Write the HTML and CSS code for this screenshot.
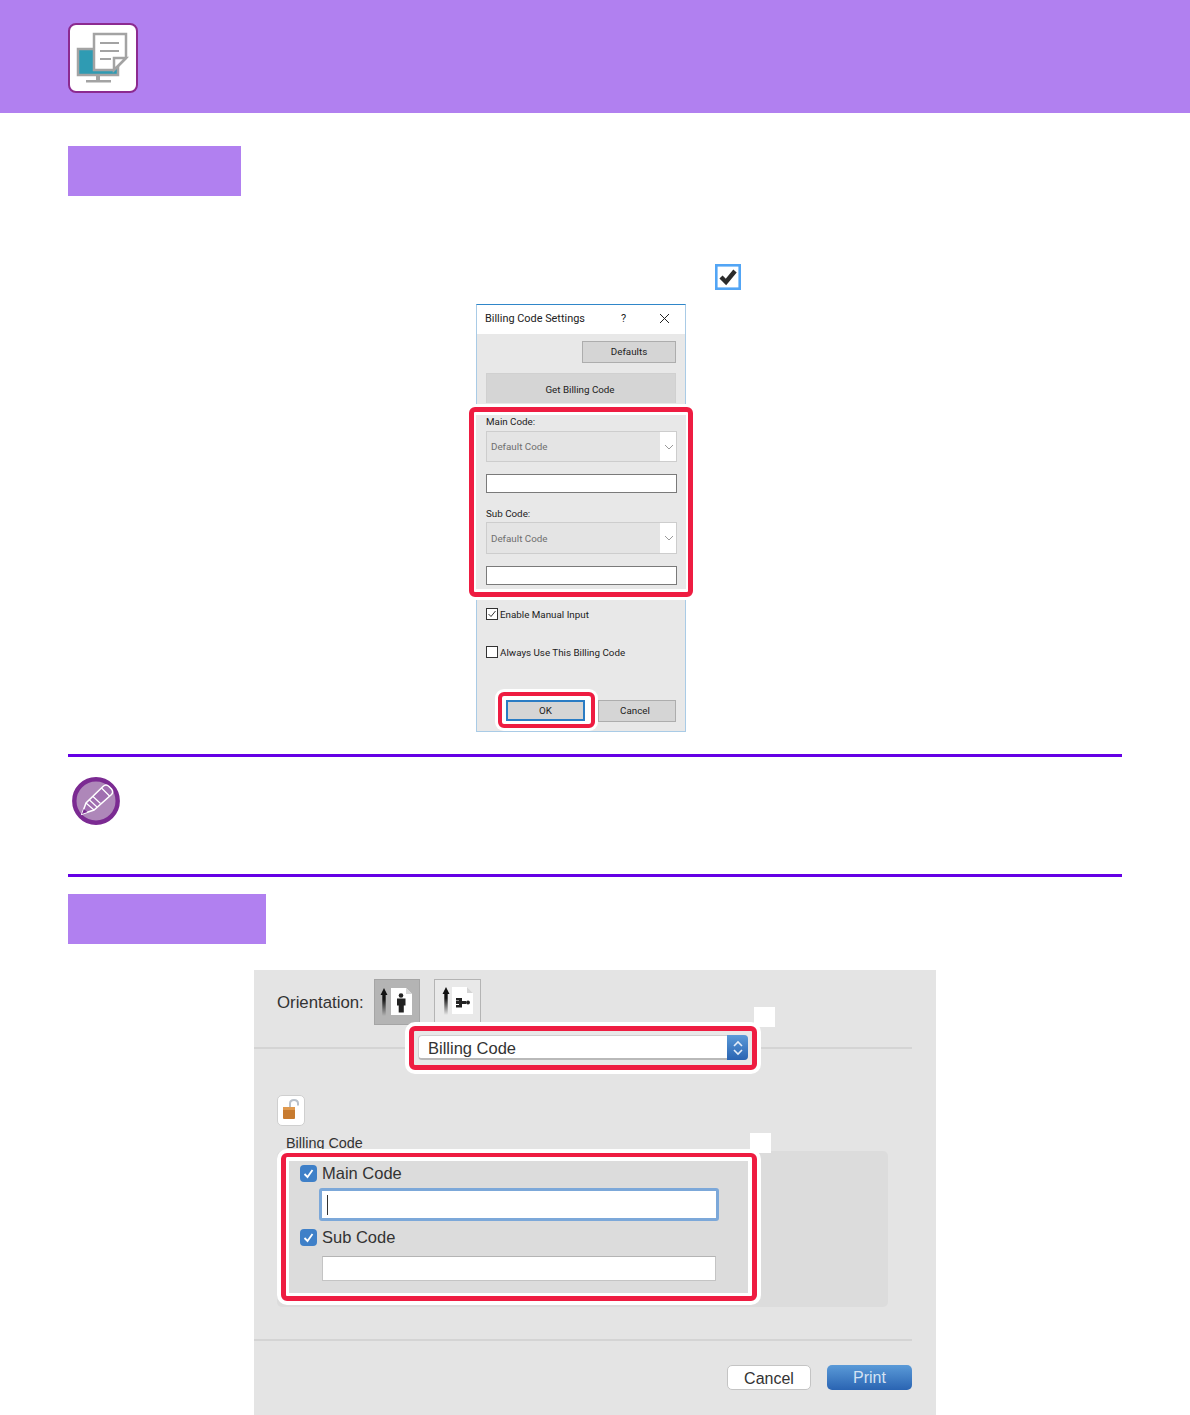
FILE: index.html
```html
<!DOCTYPE html>
<html lang="en">
<head>
  <meta charset="UTF-8" />
  <meta name="viewport" content="width=device-width, initial-scale=1" />
  <title>Billing Code</title>
  <link rel="stylesheet" href="styles.css">
</head>
<body>

  <header class="top-bar">
    <div class="top-icon">
      <svg width="66" height="66" viewBox="0 0 66 66">
        <rect x="8" y="24" width="40" height="26" fill="#2f9bb3" stroke="#a3a3a3" stroke-width="2.500"/>
        <rect x="26" y="50" width="4" height="5" fill="#a3a3a3"/>
        <rect x="16" y="55" width="25" height="2.500" fill="#a3a3a3"/>
        <path d="M24 9H56V33L44 45H24Z" fill="#fff" stroke="#a3a3a3" stroke-width="2.500"/>
        <path d="M44 45V33H56Z" fill="#fff" stroke="#a3a3a3" stroke-width="2.500"/>
        <path d="M30 18H49M30 26H49M30 34H41" stroke="#a3a3a3" stroke-width="2"/>
      </svg>
    </div>
  </header>

  <main class="page">
    <div class="tag tag-win"></div>

    <div class="check-row">
      <svg class="check-box" width="26" height="26" viewBox="0 0 26 26">
        <rect x="1.300" y="1.300" width="23.400" height="23.400" fill="#fff" stroke="#52a5f5" stroke-width="2.600"/>
        <path d="M6 13L11 18L20 7" fill="none" stroke="#2b2b2b" stroke-width="4.400"/>
      </svg>
    </div>

    <!-- Windows dialog -->
    <div class="win">
      <div class="win-title">
        <span class="win-title-text">Billing Code Settings</span>
        <span class="win-help">?</span>
        <svg class="win-close" width="11" height="11" viewBox="0 0 11 11">
          <path d="M1 1L10 10M10 1L1 10" stroke="#222" stroke-width="1"/>
        </svg>
      </div>
      <div class="win-body">
        <div class="win-defaults-row"><div class="win-btn win-defaults">Defaults</div></div>
        <div class="win-btn win-get">Get Billing Code</div>

        <div class="win-callout">
          <div class="win-codes">
            <div class="win-label">Main Code:</div>
            <div class="win-select win-select-a">
              <span class="win-select-text">Default Code</span>
              <span class="win-select-arrow">
                <svg width="10" height="6" viewBox="0 0 10 6"><path d="M1 1L5 5L9 1" fill="none" stroke="#9a9a9a"/></svg>
              </span>
            </div>
            <div class="win-input"></div>
            <div class="win-label win-label-sub">Sub Code:</div>
            <div class="win-select win-select-b">
              <span class="win-select-text">Default Code</span>
              <span class="win-select-arrow">
                <svg width="10" height="6" viewBox="0 0 10 6"><path d="M1 1L5 5L9 1" fill="none" stroke="#9a9a9a"/></svg>
              </span>
            </div>
            <div class="win-input"></div>
          </div>
        </div>

        <div class="win-check win-check-first">
          <svg width="12" height="12" viewBox="0 0 12 12">
            <rect x="0.5" y="0.5" width="11" height="11" fill="#fff" stroke="#333"/>
            <path d="M2.500 6L5 8.500L9.500 3" fill="none" stroke="#333"/>
          </svg>
          <span>Enable Manual Input</span>
        </div>
        <div class="win-check win-check-second">
          <svg width="12" height="12" viewBox="0 0 12 12">
            <rect x="0.5" y="0.5" width="11" height="11" fill="#fff" stroke="#333"/>
          </svg>
          <span>Always Use This Billing Code</span>
        </div>

        <div class="win-actions">
          <div class="win-ok-callout"><div class="win-btn win-ok">OK</div></div>
          <div class="win-btn win-cancel">Cancel</div>
        </div>
      </div>
    </div>

    <!-- note box -->
    <div class="note">
      <svg class="note-icon" width="48" height="48" viewBox="0 0 48 48">
        <circle cx="24" cy="24" r="21.700" fill="#ae87b9" stroke="#7b2a92" stroke-width="4.400"/>
        <path d="M10 37L14 26L31 9.500C33 7.500 35 7.500 37 9.500L39.500 12C41 14 41 16 39.500 17.500L22 33Z" fill="#a06fb0" stroke="#fff" stroke-width="1.500"/>
        <path d="M14 26L22 33M17.500 23L25 30M21 19.500L28.500 26.500M29.500 11L37.500 19" fill="none" stroke="#fff" stroke-width="1.200"/>
        <path d="M10 37L11.800 32L15.500 35Z" fill="#7b2a92"/>
      </svg>
    </div>

    <div class="tag tag-mac"></div>

    <!-- Mac print dialog -->
    <div class="mac">
      <div class="mac-orient">
        <span class="mac-orient-label">Orientation:</span>
        <div class="orient-btn orient-on">
          <svg width="44" height="44" viewBox="0 0 44 44">
            <defs>
              <linearGradient id="arrowA" x1="0" y1="0" x2="0" y2="1">
                <stop offset="0.4" stop-color="#111"/><stop offset="1" stop-color="#111" stop-opacity="0"/>
              </linearGradient>
            </defs>
            <path d="M9 8L12.500 15H10.700V36H7.300V15H5.500Z" fill="url(#arrowA)"/>
            <path d="M16 8H31L37 14V35H16Z" fill="#fff"/>
            <path d="M31 8V14H37" fill="#d5d5d5"/>
            <circle cx="26" cy="15.500" r="2.300" fill="#222"/>
            <path d="M22 18.500H30.500V25.500H28.800V32.500H23.700V25.500H22Z" fill="#222"/>
          </svg>
        </div>
        <div class="orient-btn orient-off">
          <svg width="44" height="44" viewBox="0 0 44 44">
            <defs>
              <linearGradient id="arrowB" x1="0" y1="0" x2="0" y2="1">
                <stop offset="0.4" stop-color="#111"/><stop offset="1" stop-color="#111" stop-opacity="0"/>
              </linearGradient>
            </defs>
            <path d="M11 7L14.500 14H12.700V35H9.300V14H7.500Z" fill="url(#arrowB)"/>
            <path d="M17 7H32L38 13V34H17Z" fill="#fff"/>
            <path d="M32 7V13H38" fill="#d5d5d5"/>
            <path d="M21 18H27V21H31V24H27V27.500H21V25H24V24H21V21H24V20.500H21Z" fill="#222"/>
            <circle cx="33" cy="22.500" r="2" fill="#222"/>
          </svg>
        </div>
      </div>

      <div class="mac-popup-row">
        <div class="mac-popup-callout">
          <div class="mac-popup">
            <span class="mac-popup-text">Billing Code</span>
            <span class="mac-popup-arrow">
              <svg width="12" height="18" viewBox="0 0 12 18">
                <path d="M2 7L6 3L10 7M2 11L6 15L10 11" fill="none" stroke="#e4edf8" stroke-width="1.600"/>
              </svg>
            </span>
          </div>
        </div>
        <div class="blank-mark blank-mark-a"></div>
      </div>

      <div class="mac-lock">
        <svg width="18" height="22" viewBox="0 0 18 22">
          <path d="M7 10V6.500C7 4 8.500 3 11 3S15 4 15 6.500V8.500" fill="none" stroke="#b9c1cb" stroke-width="2"/>
          <rect x="0" y="10" width="12" height="12" rx="1" fill="#c77b30"/>
          <rect x="0" y="10" width="12" height="3" fill="#e09a50"/>
        </svg>
      </div>

      <div class="mac-group-label">Billing Code</div>

      <div class="mac-group">
        <div class="blank-mark blank-mark-b"></div>
        <div class="mac-callout">
          <div class="mac-codes">
            <div class="mac-check">
              <span class="mac-box">
                <svg width="13" height="13" viewBox="0 0 13 13"><path d="M2.500 7L5.500 10L10.500 3" fill="none" stroke="#fff" stroke-width="1.800"/></svg>
              </span>
              <span>Main Code</span>
            </div>
            <div class="mac-input-focus"><span class="mac-caret"></span></div>
            <div class="mac-check mac-check-sub">
              <span class="mac-box">
                <svg width="13" height="13" viewBox="0 0 13 13"><path d="M2.500 7L5.500 10L10.500 3" fill="none" stroke="#fff" stroke-width="1.800"/></svg>
              </span>
              <span>Sub Code</span>
            </div>
            <div class="mac-input"></div>
          </div>
        </div>
      </div>

      <div class="mac-line"></div>

      <div class="mac-actions">
        <div class="mac-btn mac-cancel">Cancel</div>
        <div class="mac-btn mac-print">Print</div>
      </div>
    </div>
  </main>

</body>
</html>
```

FILE: styles.css
```css
body {
  margin: 0;
  background: #fff;
  font-family: "Liberation Sans", Arial, sans-serif;
}
.top-bar {
  height: 113px;
  padding: 23px 0 0 68px;
  box-sizing: border-box;
  background: #b180f0;
}
.top-icon {
  width: 70px;
  height: 70px;
  box-sizing: border-box;
  border: 2px solid #8c2a90;
  border-radius: 8px;
  background: #fff;
}
.top-icon svg {
  display: block;
}
.page {
  padding: 0 68px;
}
.tag {
  height: 50px;
  background: #b180f0;
}
.tag-win {
  width: 173px;
  margin-top: 33px;
}
.tag-mac {
  width: 198px;
  margin-top: 17px;
}
.check-row {
  height: 26px;
  margin: 68px 0 14px 647px;
}
.check-box {
  display: block;
}

/* windows dialog */
.win {
  width: 210px;
  margin-left: 408px;
  box-sizing: border-box;
  border: 1px solid #a9cbe6;
  border-top-color: #2f86c9;
  font-family: Roboto, "Noto Sans", sans-serif;
  font-size: 9.800px;
  color: #222;
}
.win-title {
  height: 29px;
  padding: 0 0 2px 8px;
  box-sizing: border-box;
  display: flex;
  align-items: center;
  background: #fff;
  font-size: 10.900px;
}
.win-title-text {
  width: 136px;
}
.win-help {
  width: 38px;
}
.win-close {
  display: block;
}
.win-body {
  padding: 7px 9px 3px;
  background: #e8e8e8;
}
.win-defaults-row {
  display: flex;
  justify-content: flex-end;
}
.win-btn {
  display: flex;
  align-items: center;
  justify-content: center;
  padding-bottom: 1px;
  box-sizing: border-box;
  background: #d5d5d5;
  border: 1px solid #adadad;
}
.win-defaults {
  width: 94px;
  height: 22px;
}
.win-get {
  height: 30px;
  margin-top: 10px;
  padding: 1px 2px 0 0;
  border-color: #d0d0d0;
  border-bottom: none;
}
.win-callout {
  position: relative;
  margin: 4px -17px 0;
  height: 190px;
  box-sizing: border-box;
  border-style: solid;
  border-width: 5px;
  border-color: #ee1c41;
  border-radius: 6px;
  padding: 3px 2px;
  background: #fff;
  box-shadow: 0 0 0 3px #fff;
}
.win-codes {
  height: 174px;
  padding: 0 9px 0 10px;
  background: #e8e8e8;
}
.win-label {
  height: 12px;
  line-height: 13px;
}
.win-label-sub {
  margin-top: 14px;
}
.win-select {
  display: flex;
  width: 191px;
  box-sizing: border-box;
  border: 1px solid #cdcdcd;
  background: #e4e4e4;
  color: #6f6f6f;
}
.win-select-a {
  height: 31px;
  margin-top: 4px;
}
.win-select-b {
  height: 32px;
  margin-top: 3px;
}
.win-select-text {
  flex: 1;
  padding-left: 4px;
  align-self: center;
}
.win-select-arrow {
  width: 16px;
  padding-left: 1px;
  box-sizing: border-box;
  display: flex;
  align-items: center;
  justify-content: center;
  background: #fff;
}
.win-input {
  width: 191px;
  height: 19px;
  margin-top: 12px;
  box-sizing: border-box;
  border: 1px solid #7a7a7a;
  background: #fff;
}
.win-check {
  display: flex;
  align-items: center;
  gap: 2px;
  height: 12px;
}
.win-check svg {
  display: block;
}
.win-check-first {
  margin-top: 11px;
}
.win-check-second {
  margin-top: 26px;
}
.win-actions {
  display: flex;
  align-items: flex-start;
  margin: 34px 0 0 12px;
}
.win-ok-callout {
  position: relative;
  width: 97px;
  height: 36px;
  box-sizing: border-box;
  border: 4px solid #ee1c41;
  border-radius: 6px;
  padding: 4px;
  background: #fff;
  box-shadow: 0 0 0 3px #fff;
}
.win-ok {
  width: 79px;
  height: 21px;
  border: 2px solid #2a7cc4;
  background: #d5d5d5;
}
.win-cancel {
  width: 78px;
  height: 22px;
  margin: 8px 0 0 3px;
  padding-right: 4px;
}

/* note */
.note {
  height: 97px;
  padding: 20px 0 0 4px;
  margin-top: 22px;
  border-top: 3px solid #6500e5;
  border-bottom: 3px solid #6500e5;
}
.note-icon {
  display: block;
}

/* mac dialog */
.mac {
  width: 682px;
  height: 445px;
  margin: 26px 0 0 186px;
  padding: 9px 24px 0 0;
  box-sizing: border-box;
  background: #e4e4e4;
  color: #333;
}
.mac-orient {
  display: flex;
  align-items: center;
  height: 46px;
  padding-left: 23px;
}
.mac-orient-label {
  width: 97px;
  font-size: 16.800px;
  margin-top: 1px;
}
.orient-btn {
  width: 46px;
  height: 46px;
  box-sizing: border-box;
  border: 1px solid #b4b4b4;
}
.orient-btn svg {
  display: block;
}
.orient-on {
  background: #b4b4b4;
  border-color: #a5a5a5;
}
.orient-off {
  width: 47px;
  margin-left: 14px;
  background: #e9e9e9;
}
.mac-popup-row {
  position: relative;
  height: 42px;
  margin-top: 3px;
  padding-left: 155px;
  background: linear-gradient(#d4d4d4, #d4d4d4) 0 19px / 100% 2px no-repeat;
}
.mac-popup-callout {
  position: relative;
  top: -2px;
  width: 348px;
  height: 44px;
  box-sizing: border-box;
  border: 5px solid #ee1c41;
  border-radius: 6px;
  padding: 4px;
  background: #e8e8e8;
  box-shadow: 0 0 0 4px #fff;
}
.mac-popup {
  display: flex;
  height: 25px;
  box-sizing: border-box;
  border: 1px solid #cfcfcf;
  border-bottom: 2px solid #b9b9b9;
  border-radius: 4px;
  background: #fff;
}
.mac-popup-text {
  flex: 1;
  padding-left: 9px;
  font-size: 16.500px;
  line-height: 25px;
}
.mac-popup-arrow {
  width: 21px;
  margin: -1px -1px -2px 0;
  display: flex;
  align-items: center;
  justify-content: center;
  border-radius: 0 4px 4px 0;
  background: linear-gradient(#5a9ad8, #2a64b2);
}
.blank-mark {
  position: absolute;
  width: 21px;
  height: 20px;
  background: #fff;
}
.blank-mark-a {
  left: 500px;
  top: -21px;
}
.blank-mark-b {
  left: 473px;
  top: -18px;
}
.mac-lock {
  width: 28px;
  height: 31px;
  margin: 25px 0 0 23px;
  box-sizing: border-box;
  padding: 1px 0 0 5px;
  border: 1px solid #cfcfcf;
  border-radius: 5px;
  background: #fff;
}
.mac-lock svg {
  display: block;
}
.mac-group-label {
  height: 17px;
  margin: 8px 0 0 32px;
  font-size: 14.400px;
  line-height: 19px;
}
.mac-group {
  position: relative;
  width: 611px;
  height: 156px;
  margin-left: 23px;
  padding: 2px 0 0 4px;
  box-sizing: border-box;
  border-radius: 5px;
  background: #dcdcdc;
}
.mac-callout {
  position: relative;
  width: 476px;
  height: 148px;
  box-sizing: border-box;
  border-style: solid;
  border-width: 4px 5px 5px;
  border-color: #ee1c41;
  border-radius: 6px;
  padding: 4px 4px 3px 3px;
  background: #fff;
  box-shadow: 0 0 0 4px #fff;
}
.mac-codes {
  height: 132px;
  padding: 4px 0 0 11px;
  box-sizing: border-box;
  background: #dcdcdc;
}
.mac-check {
  display: flex;
  align-items: center;
  gap: 5px;
  height: 17px;
  font-size: 16.500px;
}
.mac-check-sub {
  margin-top: 8px;
}
.mac-box {
  width: 17px;
  height: 17px;
  display: flex;
  align-items: center;
  justify-content: center;
  border-radius: 4px;
  background: #3f80c8;
}
.mac-input-focus {
  width: 400px;
  height: 33px;
  margin: 6px 0 0 19px;
  padding: 7px 0 0 5px;
  box-sizing: border-box;
  border: 3px solid #7ca8d9;
  border-radius: 3px;
  background: #fff;
}
.mac-caret {
  display: block;
  width: 1px;
  height: 20px;
  margin-top: -3px;
  background: #333;
}
.mac-input {
  width: 394px;
  height: 25px;
  margin: 10px 0 0 22px;
  box-sizing: border-box;
  border: 1px solid #c4c4c4;
  border-top-color: #b4b4b4;
  background: #fff;
}
.mac-line {
  height: 2px;
  margin-top: 32px;
  background: #d4d4d4;
}
.mac-actions {
  display: flex;
  justify-content: flex-end;
  gap: 16px;
  margin-top: 24px;
}
.mac-btn {
  height: 25px;
  box-sizing: border-box;
  border-radius: 5px;
  font-size: 16px;
  line-height: 25px;
  text-align: center;
}
.mac-cancel {
  width: 84px;
  border: 1px solid #c4c4c4;
  background: #fff;
}
.mac-print {
  width: 85px;
  color: #d5e3f3;
  background: linear-gradient(#5a9ad8, #2a64b2);
}
```
